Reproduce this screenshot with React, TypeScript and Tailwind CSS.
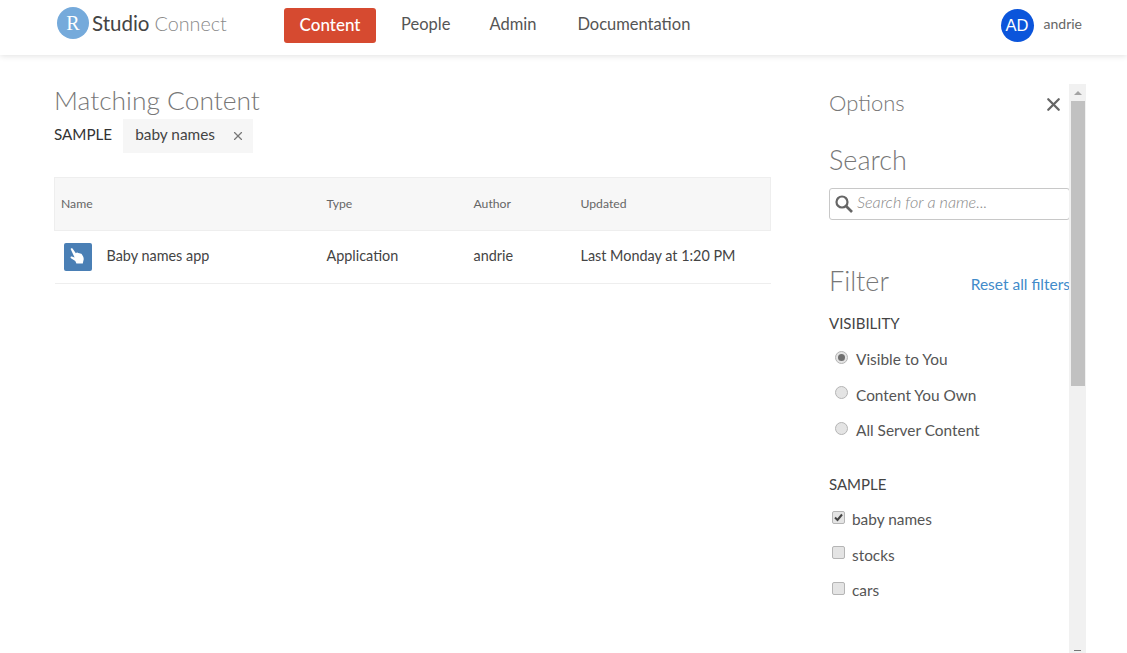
import { X } from "lucide-react";

const navItems = ["People", "Admin", "Documentation"];
const visibility = ["Visible to You", "Content You Own", "All Server Content"];
const samples = ["baby names", "stocks", "cars"];

const Radio = ({ checked }: { checked: boolean }) => (
    <span className="w-[13px] h-[13px] rounded-full border border-[#b5b5b5] bg-[#e4e4e4] flex items-center justify-center shrink-0">
        {checked && <span className="w-[7px] h-[7px] rounded-full bg-[#6f6f6f]" />}
    </span>
);

const Check = ({ checked }: { checked: boolean }) => (
    <span className="w-[13px] h-[13px] rounded-[2px] border border-[#b5b5b5] bg-[#e4e4e4] flex items-center justify-center shrink-0">
        {checked && (
            <svg width="11" height="11" viewBox="0 0 11 11">
                <path d="M2 5.5 L4.5 8 L9 2.5" fill="none" stroke="#444" strokeWidth="2" />
            </svg>
        )}
    </span>
);

const App = () => {
    return (
        <div className="w-[1127px] h-[653px] overflow-hidden bg-white flex flex-col font-['Lato',sans-serif] text-[#555]">
            <header className="h-[55px] shrink-0 flex items-start pl-[57px] pr-[45px] shadow-[0_1px_6px_rgba(0,0,0,0.12)] z-10 bg-white">
                <div className="w-[227px] flex items-center pt-[7px]">
                    <span className="w-[32px] h-[32px] rounded-full bg-[#75aadb] text-white flex items-center justify-center font-['Liberation_Serif',serif] text-[20px] shrink-0">
                        R
                    </span>
                    <span className="ml-[3px] text-[20.5px] leading-[32px] text-[#444]">Studio</span>
                    <span className="ml-[5px] text-[19.8px] leading-[32px] font-light text-[#8a8a8a]">Connect</span>
                </div>
                <nav className="flex items-center pt-[8px]">
                    <span className="w-[92px] h-[35px] rounded-[3px] bg-[#d64a30] text-white text-[17px] font-medium flex items-center justify-center pb-[2px]">
                        Content
                    </span>
                    <span className="ml-[25px] mb-[2px] text-[16.5px] text-[#555]">{navItems[0]}</span>
                    <span className="ml-[39px] mb-[2px] text-[16.5px] text-[#555]">{navItems[1]}</span>
                    <span className="ml-[41px] mb-[2px] text-[16.5px] text-[#555]">{navItems[2]}</span>
                </nav>
                <div className="ml-auto flex items-center pt-[9px]">
                    <span className="w-[33px] h-[33px] rounded-full bg-[#0b55db] text-white text-[16.5px] font-['Liberation_Sans',sans-serif] flex items-center justify-center pb-[1px]">
                        AD
                    </span>
                    <span className="ml-[10px] mb-[4px] text-[14px] text-[#666]">andrie</span>
                </div>
            </header>

            <main className="flex-1 flex min-h-0">
                <section className="w-[717px] ml-[54px] shrink-0 pt-[27px]">
                    <h1 className="text-[26.4px] leading-[36px] font-light text-[#777]">Matching Content</h1>
                    <div className="flex items-center mt-[1px]">
                        <span className="text-[15.2px] pb-[3px] text-[#333]">SAMPLE</span>
                        <span className="ml-[11px] h-[34px] w-[130px] bg-[#f6f6f6] flex items-center pl-[12px] pb-[3px] text-[15.4px] text-[#444]">
                            baby names
                            <X size={14} strokeWidth={2} className="ml-[16px] mt-[3px] text-[#777]" />
                        </span>
                    </div>
                    <table className="w-full table-fixed mt-[24px] border-collapse text-[14.4px]">
                        <thead>
                            <tr className="h-[53px] bg-[#f7f7f7] border border-[#eeeeee] text-left text-[12.2px] text-[#666]">
                                <th className="w-[272px] pl-[6px] font-normal">Name</th>
                                <th className="w-[147px] font-normal">Type</th>
                                <th className="w-[107px] font-normal">Author</th>
                                <th className="font-normal">Updated</th>
                            </tr>
                        </thead>
                        <tbody>
                            <tr className="h-[53px] border-b border-[#eeeeee] text-[#444]">
                                <td>
                                    <div className="flex items-center pl-[9px] pb-[1px]">
                                        <span className="w-[28px] h-[28px] rounded-[2px] bg-[#4a7fb5] flex items-center justify-center">
                                            <svg width="21" height="21" viewBox="0 0 19 19">
                                                <path
                                                    d="M3.5 3.2c-.7-.9.8-1.8 1.5-.9L8 6.5l.6-.4c.7-.4 1.3-.1 1.6.4.5-.4 1.3-.2 1.6.4.6-.3 1.3 0 1.6.5l1.2 2.2c.7 1.4.6 2.6.2 3.8l-.5 2.4H8.5L7.5 13.5 3.6 11c-.9-.6-.2-1.9.8-1.5l2.5 1z"
                                                    fill="#fff"
                                                />
                                            </svg>
                                        </span>
                                        <span className="ml-[15px] mb-[1px]">Baby names app</span>
                                    </div>
                                </td>
                                <td className="pb-[3px]">Application</td>
                                <td className="pb-[3px]">andrie</td>
                                <td className="pb-[3px]">Last Monday at 1:20 PM</td>
                            </tr>
                        </tbody>
                    </table>
                </section>

                <aside className="ml-[58px] w-[257px] mt-[29px] flex shrink-0 min-h-0">
                    <div className="w-[240px] shrink-0">
                        <div className="flex items-center justify-between h-[36px]">
                            <h2 className="text-[22px] font-light text-[#777]">Options</h2>
                            <X size={21} strokeWidth={2.6} className="text-[#666] mr-[5px] mt-[4px]" />
                        </div>
                        <h2 className="mt-[22px] text-[27px] leading-[36px] font-light text-[#777]">Search</h2>
                        <div className="mt-[10px] h-[32px] w-[241px] rounded-[3px] border border-[#c8c8c8] flex items-center pl-[4px]">
                            <svg width="20" height="20" viewBox="0 0 20 20" className="shrink-0">
                                <circle cx="8" cy="8" r="5.5" fill="none" stroke="#666" strokeWidth="2.2" />
                                <path d="M12 12 L18 18" stroke="#666" strokeWidth="2.6" />
                            </svg>
                            <span className="ml-[3px] pb-[3px] text-[16.2px] italic font-light text-[#888]">Search for a name...</span>
                        </div>
                        <div className="mt-[43px] flex items-end justify-between w-[241px]">
                            <h2 className="text-[27px] leading-[36px] font-light text-[#777]">Filter</h2>
                            <a className="text-[15.5px] text-[#428bca] pb-[3px]">Reset all filters</a>
                        </div>
                        <h3 className="mt-[13px] text-[15px] leading-[22px] text-[#444]">VISIBILITY</h3>
                        <ul className="mt-[15px] flex flex-col gap-[13.5px] pl-[6px]">
                            {visibility.map((label, i) => (
                                <li key={label} className="flex items-center h-[22px] text-[15.4px] text-[#555]">
                                    <span className="mt-[-6px]">
                                        <Radio checked={i === 0} />
                                    </span>
                                    <span className="ml-[8px]">{label}</span>
                                </li>
                            ))}
                        </ul>
                        <h3 className="mt-[31px] text-[15px] leading-[22px] text-[#444]">SAMPLE</h3>
                        <ul className="mt-[14px] flex flex-col gap-[13.5px] pl-[3px]">
                            {samples.map((label, i) => (
                                <li key={label} className="flex items-center h-[22px] text-[15.4px] text-[#555]">
                                    <span className="mt-[-6px]">
                                        <Check checked={i === 0} />
                                    </span>
                                    <span className="ml-[7px]">{label}</span>
                                </li>
                            ))}
                        </ul>
                    </div>
                    <div className="w-[17px] shrink-0 bg-[#f1f1f1] flex flex-col items-center">
                        <div className="h-[17px] flex items-center justify-center">
                            <span className="w-0 h-0 border-x-[4px] border-x-transparent border-b-[4px] border-b-[#a3a3a3]" />
                        </div>
                        <div className="w-[14px] h-[285px] bg-[#c1c1c1]" />
                        <div className="mt-auto h-[3px] flex items-start justify-center">
                            <span className="w-[7px] h-[1px] bg-[#777]" />
                        </div>
                    </div>
                </aside>
            </main>
        </div>
    );
};

export default App;
